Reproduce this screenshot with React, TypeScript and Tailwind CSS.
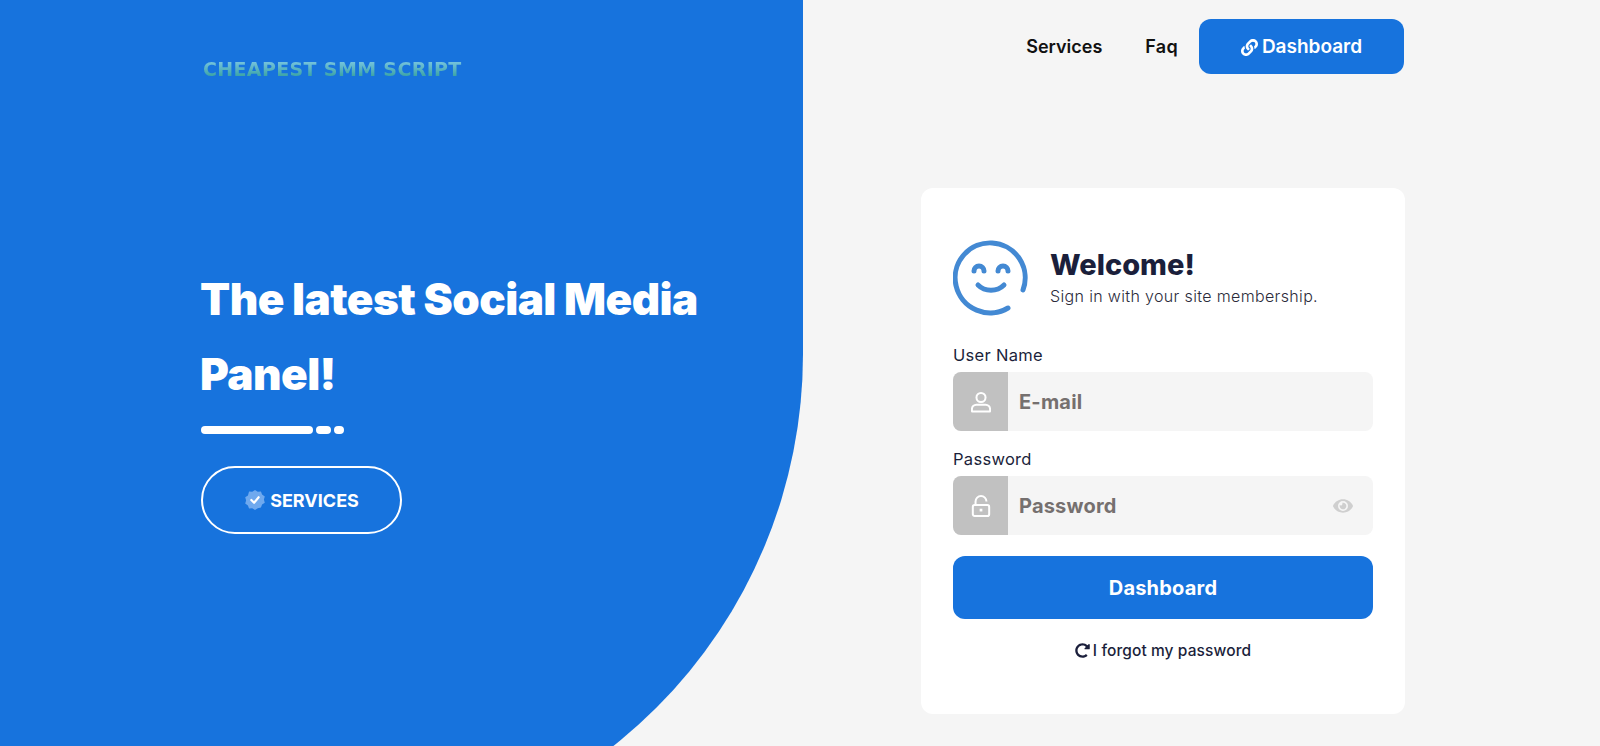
import { FaEye, FaLink, FaRedoAlt } from "react-icons/fa";

const body = { fontFamily: "Inter, 'Noto Sans', sans-serif" };

function UserIcon() {
  return (
    <svg width="20" height="22" viewBox="0 0 22 24" fill="none" stroke="#fff" strokeWidth="2.200">
      <circle cx="11" cy="7" r="5" />
      <path d="M6 15h10a5 5 0 0 1 5 5v1.500a1 1 0 0 1-1 1H2a1 1 0 0 1-1-1V20a5 5 0 0 1 5-5z" />
    </svg>
  );
}

function LockIcon() {
  return (
    <svg width="20" height="22" viewBox="0 0 22 24" fill="none" stroke="#fff" strokeWidth="2.200">
      <path d="M5 11V7a6 6 0 0 1 12 0" />
      <rect x="2" y="11" width="18" height="12" rx="2" />
      <rect x="9.500" y="15" width="3" height="3" fill="#fff" stroke="none" />
    </svg>
  );
}

function Field({ label, placeholder, icon, eye }: { label: string; placeholder: string; icon: React.ReactNode; eye?: boolean }) {
  return (
    <div className="mb-[16px]">
      <div className="text-[16.500px] leading-[24px] tracking-[0.3px] text-[#1b1f3b] mb-[5px]">{label}</div>
      <div className="flex h-[59px] rounded-[8px] bg-[#f5f5f5] overflow-hidden">
        <div className="w-[55px] bg-[#c1c1c1] flex items-center justify-center">{icon}</div>
        <div className="flex-1 flex items-center pl-[11px] pr-[20px] justify-between">
          <span className="text-[20px] font-bold tracking-[0.2px] text-[#75706f]">{placeholder}</span>
          {eye && <FaEye size={20} className="text-[#cfcfcf]" />}
        </div>
      </div>
    </div>
  );
}

export default function App() {
  return (
    <div style={body} className="relative h-[746px] overflow-hidden bg-[#f5f5f5]">
      <div className="absolute left-0 top-0 w-[803px] h-[854px] bg-[#1773dd] rounded-br-[500px]" />
      <div className="relative flex justify-center h-full">
        <div className="w-[1208px] flex">
          <div className="w-[604px] pt-[57px] pl-[5px] text-white">
            <div className="pl-[2px] h-[24px] text-[19px] leading-[24px] font-bold tracking-[0.350px] text-transparent bg-clip-text bg-gradient-to-b from-[#86cdf0] to-[#1f9a94] blur-[0.3px]" style={{ fontFamily: "'DejaVu Sans', sans-serif" }}>CHEAPEST SMM SCRIPT</div>
            <h1 className="mt-[181px] -ml-[1px] text-[44px] leading-[75px] font-black tracking-[-0.550px]">The latest Social Media<br />Panel!</h1>
            <div className="flex gap-[3px] mt-[14px] h-[8px]">
              <span className="w-[112px] rounded-full bg-white" />
              <span className="w-[15px] rounded-full bg-white" />
              <span className="w-[10px] rounded-full bg-white" />
            </div>
            <button className="mt-[32px] w-[201px] h-[68px] rounded-full border-2 border-white flex items-center justify-center gap-[4px] text-[18px] font-bold">
              <svg width="22" height="22" viewBox="0 0 24 24"><path fill="#6fa9ee" d="M12 1l3 2 3.500-.2 1.200 3.300 3 2-1 3.400 1 3.400-3 2-1.200 3.300L15 21l-3 2-3-2-3.500.2-1.200-3.300-3-2 1-3.400-1-3.400 3-2L5.500 2.800 9 3z" /><path d="M8 12l3 3 5-6" fill="none" stroke="#fff" strokeWidth="2.400" strokeLinecap="round" strokeLinejoin="round" /></svg>
              SERVICES
            </button>
          </div>
          <div className="flex-1 flex flex-col items-end">
            <nav className="flex items-center h-[55px] mt-[19px]">
              <a className="text-[18px] font-semibold text-[#111]">Services</a>
              <a className="ml-[43px] text-[18px] font-semibold tracking-[0.3px] text-[#111]">Faq</a>
              <button className="ml-[21px] w-[205px] h-[55px] pt-[2px] rounded-[12px] bg-[#1773dd] text-white text-[19px] font-semibold flex items-center justify-center gap-[4px]">
                <FaLink size={17} /> Dashboard
              </button>
            </nav>
            <div className="mt-[114px] -mr-[1px] w-[484px] h-[526px] bg-white rounded-[12px] px-[32px] pt-[52px]">
              <div className="flex items-center gap-[21px] mb-[27px]">
                <svg width="76" height="76" viewBox="0 0 76 76" fill="none" stroke="#4389d3" strokeWidth="5" strokeLinecap="round">
                  <path d="M55 68A35 35 0 1 1 70 50" />
                  <path d="M21 31a5 5 0 0 1 10 0M45 31a5 5 0 0 1 10 0M25 45c7 7 19 7 26 0" />
                </svg>
                <div className="pb-[1px]">
                  <div className="text-[29px] leading-[34px] font-extrabold text-[#1b1f3b]">Welcome!</div>
                  <div className="mt-[3px] text-[16px] leading-[22px] font-light tracking-[0.350px] text-[#2b2b3b]">Sign in with your site membership.</div>
                </div>
              </div>
              <Field label="User Name" placeholder="E-mail" icon={<UserIcon />} />
              <Field label="Password" placeholder="Password" icon={<LockIcon />} eye />
              <button className="mt-[5px] w-full h-[63px] rounded-[12px] bg-[#1773dd] text-white text-[20px] font-bold tracking-[0.2px]">Dashboard</button>
              <div className="mt-[20px] flex items-center justify-center gap-[3px] text-[15.500px] font-medium tracking-[0.1px] text-[#1b1f3b]">
                <FaRedoAlt size={15} /> I forgot my password
              </div>
            </div>
          </div>
        </div>
      </div>
    </div>
  );
}
